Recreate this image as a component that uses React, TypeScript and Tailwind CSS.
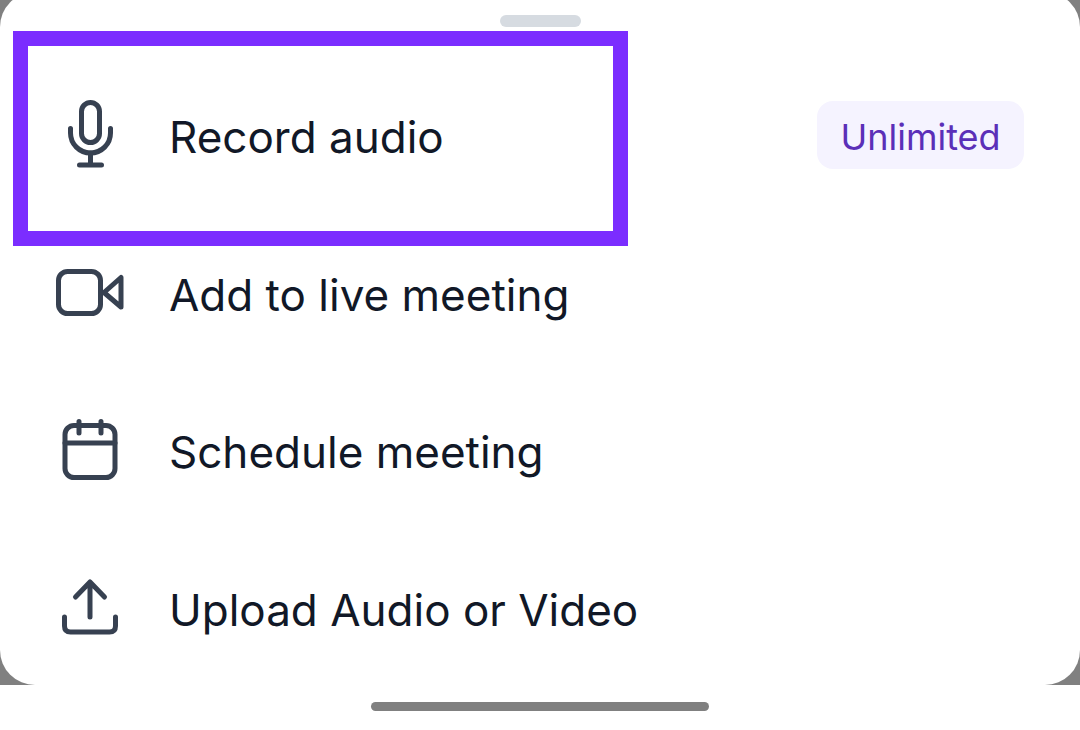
const stroke = {
  fill: 'none',
  stroke: '#374151',
  strokeWidth: 5,
  strokeLinecap: 'round' as const,
  strokeLinejoin: 'round' as const,
};

function MicIcon() {
  return (
    <svg viewBox="0 0 80 80" className="h-20 w-20 shrink-0" {...stroke}>
      <rect x="31.5" y="5.5" width="18" height="40" rx="9" />
      <path d="M20.5 31.5V36a20 20 0 0 0 40 0v-4.5" />
      <path d="M40.5 56v12M29.5 68h22" />
    </svg>
  );
}

function VideoIcon() {
  return (
    <svg viewBox="0 0 80 80" className="h-20 w-20 shrink-0" {...stroke}>
      <rect x="8.5" y="16.5" width="42" height="42" rx="9" />
      <path d="M54 37.5l17-15V52z" />
    </svg>
  );
}

function CalendarIcon() {
  return (
    <svg viewBox="0 0 80 80" className="h-20 w-20 shrink-0" {...stroke}>
      <rect x="15" y="13.5" width="50" height="52" rx="9" />
      <path d="M29 9.5V21M51 9.5V21M15 31h50" />
    </svg>
  );
}

function UploadIcon() {
  return (
    <svg viewBox="0 0 80 80" className="h-20 w-20 shrink-0" {...stroke}>
      <path d="M25.5 27L40 12l14.5 15M40 12v35" />
      <path d="M14.5 47v9q0 6 6 6h39q6 0 6-6v-9" />
    </svg>
  );
}

const rows = [
  { icon: MicIcon, label: 'Record audio', badge: 'Unlimited' },
  { icon: VideoIcon, label: 'Add to live meeting' },
  { icon: CalendarIcon, label: 'Schedule meeting' },
  { icon: UploadIcon, label: 'Upload Audio or Video' },
];

export default function App() {
  return (
    <div className="relative h-[730px] w-[1080px] overflow-hidden bg-white font-['Inter',sans-serif]">
      <div className="h-[685px] overflow-hidden bg-[#808080]">
        <div className="-mt-2 h-[693px] rounded-[35px] bg-white">
          <div className="pt-[23px]">
            <div className="mx-auto mb-[31.4px] h-3 w-[81px] rounded-md bg-[#d6dbe1]" />
          </div>
          {rows.map((row) => (
            <div key={row.label} className="flex h-[157.5px] items-center gap-[39px] pl-[50px] pr-[56px]">
              <row.icon />
              <span className="text-[44px] font-normal leading-none text-[#111827]">{row.label}</span>
              {row.badge && (
                <span className="mb-1 ml-auto flex h-[68px] w-[207px] items-center justify-center rounded-2xl bg-[#f5f3ff] pt-1 text-[36px] font-normal leading-none text-[#5b2fb8]">
                  {row.badge}
                </span>
              )}
            </div>
          ))}
        </div>
      </div>
      {/* annotation box drawn over the first row */}
      <div className="absolute left-[13px] top-[31px] h-[215px] w-[615px] border-[15px] border-[#7b2dff]" />
      <div className="mx-auto mt-[17px] h-[9px] w-[338px] rounded-full bg-[#808080]" />
    </div>
  );
}
